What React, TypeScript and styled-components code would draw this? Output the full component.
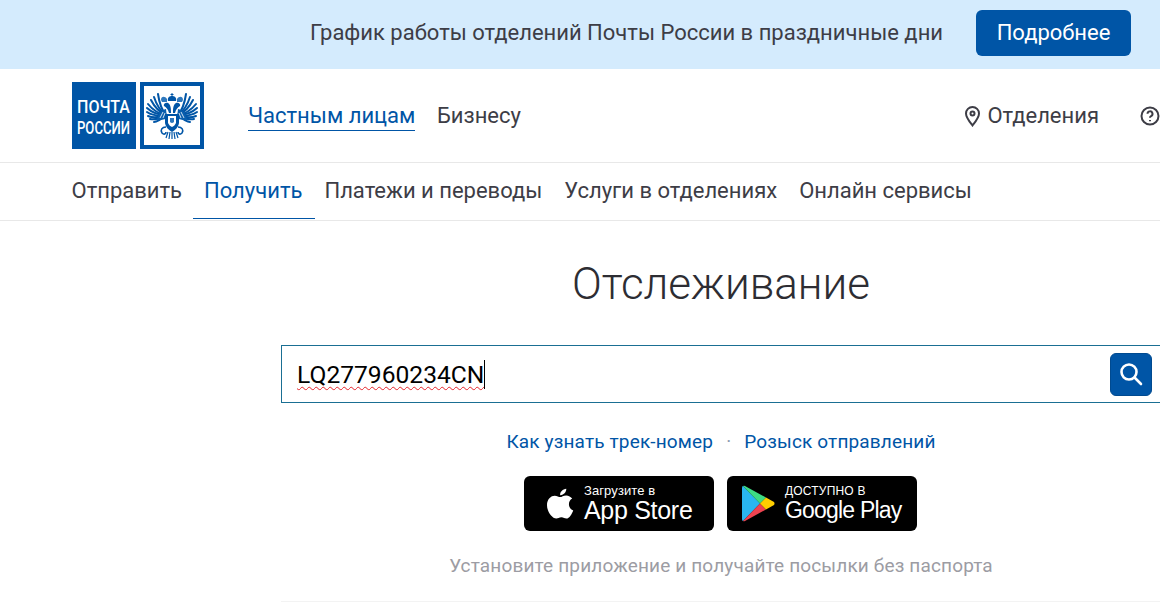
import React from 'react';
import styled, { createGlobalStyle } from 'styled-components';

const GlobalStyle = createGlobalStyle`
    html, body {
        margin: 0;
        padding: 0;
        background: #fff;
        overflow: hidden;
    }
    body {
        font-family: Roboto, "Noto Sans", sans-serif;
        color: #3d3d46;
    }
`;

const Page = styled.div`
    width: 1160px;
    height: 602px;
    overflow: hidden;
    background: #fff;
`;

const Banner = styled.div`
    height: 69px;
    box-sizing: border-box;
    padding: 10px 29px 0 310px;
    display: flex;
    justify-content: space-between;
    align-items: flex-start;
    background: #d4ebfd;
`;

const BannerText = styled.span`
    font-size: 22px;
    line-height: 46px;
    color: #3d3d46;
    white-space: nowrap;
`;

const BannerButton = styled.a`
    width: 155px;
    height: 46px;
    line-height: 46px;
    text-align: center;
    border-radius: 6px;
    background: #0055a6;
    color: #fff;
    font-size: 22px;
`;

const TopBar = styled.header`
    height: 94px;
    box-sizing: border-box;
    padding: 13px 0 0 72px;
    display: flex;
    align-items: flex-start;
    border-bottom: 1px solid #e8e8e8;
`;

const Logo = styled.svg`
    width: 132px;
    height: 67px;
    flex: none;
`;

const Audience = styled.nav`
    margin-left: 44px;
    padding-top: 20px;
    display: flex;
    gap: 21.5px;
`;

const AudienceLink = styled.a<{ $active?: boolean }>`
    font-size: 22px;
    line-height: 28px;
    height: 28px;
    color: ${({ $active }) => ($active ? '#0055a6' : '#3d3d46')};
    border-bottom: 1px solid ${({ $active }) => ($active ? '#0055a6' : 'transparent')};
`;

const TopActions = styled.div`
    margin-left: auto;
    padding-top: 20px;
    display: flex;
    gap: 41px;
`;

const TopAction = styled.a`
    display: flex;
    align-items: center;
    gap: 5px;
    height: 28px;
    font-size: 22px;
    line-height: 28px;
    color: #3d3d46;
`;

const MainNav = styled.nav`
    height: 58px;
    box-sizing: border-box;
    padding-left: 60.5px;
    display: flex;
    align-items: flex-start;
    border-bottom: 1px solid #e8e8e8;
`;

const MainNavItem = styled.a<{ $active?: boolean }>`
    height: 56px;
    box-sizing: border-box;
    padding: 0 ${({ $active }) => ($active ? 13 : 11)}px 0 11px;
    margin-right: ${({ $active }) => ($active ? -2 : 0)}px;
    font-size: 22px;
    line-height: 56px;
    white-space: nowrap;
    color: ${({ $active }) => ($active ? '#0055a6' : '#3d3d46')};
    border-bottom: 1px solid ${({ $active }) => ($active ? '#0055a6' : 'transparent')};
`;

const Main = styled.main`
    width: 880px;
    margin-left: 281px;
    display: flex;
    flex-direction: column;
    align-items: center;
`;

const Title = styled.h1`
    margin: 35px 0 0;
    font-size: 44px;
    line-height: 56px;
    font-weight: 300;
    color: #2d2d33;
`;

const SearchBox = styled.div`
    width: 100%;
    height: 58px;
    margin-top: 33px;
    box-sizing: border-box;
    padding: 0 8px 0 15px;
    display: flex;
    align-items: center;
    justify-content: space-between;
    border: 1px solid #1a6f93;
`;

const SearchValue = styled.div`
    display: flex;
    align-items: center;
    font-size: 24.6px;
    color: #000;
`;

const Misspelled = styled.span`
    text-decoration: underline wavy #e5232a 1.2px;
    text-underline-offset: 3px;
`;

const Caret = styled.span`
    width: 1px;
    height: 29px;
    background: #000;
`;

const SearchButton = styled.button`
    width: 42px;
    height: 43px;
    padding: 0;
    display: flex;
    align-items: center;
    justify-content: center;
    border: 1px solid #004a90;
    border-radius: 6px;
    background: #0055a6;
`;

const HelpLinks = styled.div`
    margin-top: 27px;
    display: flex;
    align-items: center;
    gap: 13px;
    font-size: 19px;
    line-height: 24px;
    letter-spacing: 0.15px;
    color: #0055a6;
`;

const Dot = styled.span`
    color: #8b9bb0;
`;

const Stores = styled.div`
    margin: 22px 0 0 -1px;
    display: flex;
    gap: 13px;
`;

const StoreBadge = styled.a<{ $inset: number; $gap: number }>`
    width: 190px;
    height: 55px;
    box-sizing: border-box;
    padding-left: ${({ $inset }) => $inset}px;
    display: flex;
    align-items: center;
    gap: ${({ $gap }) => $gap}px;
    border-radius: 6px;
    background: #000;
    color: #fff;
`;

const StoreText = styled.span`
    display: flex;
    flex-direction: column;
`;

const StoreCaption = styled.span<{ $upper?: boolean }>`
    font-family: "Liberation Sans", Arial, sans-serif;
    font-size: ${({ $upper }) => ($upper ? '12px' : '13px')};
    line-height: 14px;
    letter-spacing: ${({ $upper }) => ($upper ? '0.2px' : '0.1px')};
    white-space: nowrap;
`;

const StoreName = styled.span<{ $tight?: boolean }>`
    font-family: "Liberation Sans", Arial, sans-serif;
    font-size: ${({ $tight }) => ($tight ? '23px' : '25px')};
    line-height: 25px;
    letter-spacing: ${({ $tight }) => ($tight ? '-0.8px' : '-0.3px')};
    white-space: nowrap;
`;

const Hint = styled.p`
    margin: 23px 0 0;
    font-size: 19px;
    line-height: 24px;
    letter-spacing: 0.15px;
    color: #9c9ca3;
`;

const Divider = styled.div`
    width: 100%;
    height: 1px;
    margin-top: 23px;
    background: #f3f3f3;
`;

// перья крыла расходятся веером от плеча
const feathers: [number, number][] = [
    [86, 12],
    [82, 15],
    [79, 18],
    [76, 22],
    [75, 26],
    [75, 30],
    [76, 34],
    [78, 37],
    [82, 40],
];

const Wing = () => (
    <>
        {feathers.map(([x, y]) => (
            <path key={x * y} d={`M94 33Q${(x + 90) / 2} ${(y + 36) / 2 + 2} ${x} ${y}`} stroke="#0055a6" strokeWidth="2" fill="none" strokeLinecap="round" />
        ))}
        <path d="M94 27 C89 28 86 32 85 38 C88 38 92 38 95 36 Z" fill="#0a5fae" />
        <path d="M91 30 L88 36 M93 31 L91 36" stroke="#fff" strokeWidth="0.8" />
    </>
);

const Eagle = () => (
    <>
        <Wing />
        <g transform="matrix(-1 0 0 1 200 0)">
            <Wing />
        </g>
        {/* короны */}
        <path d="M100 11 v3 M98.500 12.500 h3" stroke="#0055a6" strokeWidth="1" />
        <path d="M96 19 C95 15 98 14 100 14 C102 14 105 15 104 19 Z" fill="#0055a6" />
        <path d="M89 18 C89 14 93 14 95 17 L95 20 H90 Z M111 18 C111 14 107 14 105 17 L105 20 H110 Z" fill="#2e78bd" />
        {/* головы и шеи */}
        <path d="M97 31 C96 27 94 25 92 24 C91 22 94 20 96 21 C99 23 99 27 99 31 Z" fill="#0055a6" />
        <path d="M103 31 C104 27 106 25 108 24 C109 22 106 20 104 21 C101 23 101 27 101 31 Z" fill="#0055a6" />
        {/* туловище со щитом */}
        <path d="M93 32 H107 V41 C106 46 103 48 100 50 C97 48 94 46 93 41 Z" fill="#0055a6" />
        <path d="M96 34 H104 V41 C103 43 102 44 100 45 C98 44 97 43 96 41 Z" fill="#fff" />
        <path d="M98 36 h4 v4 q-2 2 -4 0 Z" fill="#2e78bd" />
        {/* лапы и хвост */}
        <path d="M94 45 C90 45 88 48 90 51 C92 53 94 52 94 50 M106 45 C110 45 112 48 110 51 C108 53 106 52 106 50" stroke="#0055a6" strokeWidth="1.6" fill="none" />
        <path d="M96 50 L94 56 M100 50 V57 M98 50 L97 57 M102 50 L103 57 M104 50 L106 56" stroke="#0055a6" strokeWidth="1.2" />
    </>
);

const Logotype = () => (
    <Logo viewBox="0 0 132 67">
        <rect width="64" height="67" fill="#0055a6" />
        <text x="31.500" y="30.500" textAnchor="middle" fill="#fff" fontFamily="Roboto" fontSize="17.500" fontWeight="500" textLength="53" lengthAdjust="spacingAndGlyphs">
            ПОЧТА
        </text>
        <text x="31.500" y="51.500" textAnchor="middle" fill="#fff" fontFamily="Roboto" fontSize="17.500" fontWeight="500" textLength="53" lengthAdjust="spacingAndGlyphs">
            РОССИИ
        </text>
        <rect x="70" y="2" width="60" height="63" fill="#fff" stroke="#0055a6" strokeWidth="4" />
        <Eagle />
    </Logo>
);

const AppleIcon = () => (
    <svg width="27" height="31" viewBox="2 1.500 21 24" fill="#fff">
        <path d="M17 2c.2 2-1.700 5-4.800 5C12 4.500 14.200 2.300 17 2Z" />
        <path d="M12.300 8.500c1 0 2.500-1.300 4.600-1.300 1.900 0 3.700 1 4.700 2.500-3.800 2.200-3.200 7.600.8 9.200-.9 2.500-3 6.300-5.300 6.300-1.500 0-2.100-1-3.900-1-1.900 0-2.500 1-3.900 1C5.800 25.200 2 19.600 2 14.800c0-4.800 3.100-7.400 6-7.400 1.800 0 3.200 1.100 4.300 1.100Z" />
    </svg>
);

const PlayIcon = () => (
    <svg width="33" height="37" viewBox="0 0 33 37">
        <path d="M1 1 Q0 1 0 3 L0 34 Q0 36 1 36 L18 18.500 Z" fill="#29b6f0" />
        <path d="M1 1 L18 18.500 L24 12.500 L3 1 Q2 .5 1 1 Z" fill="#3ddc84" />
        <path d="M1 36 L18 18.500 L24 24.500 L3 36 Q2 36.500 1 36 Z" fill="#ee4350" />
        <path d="M24 12.500 L18 18.500 L24 24.500 L32 20 Q33 18.500 32 17 Z" fill="#ffce00" />
    </svg>
);

export default function App() {
    return (
        <Page>
            <GlobalStyle />
            <Banner>
                <BannerText>График работы отделений Почты России в праздничные дни</BannerText>
                <BannerButton>Подробнее</BannerButton>
            </Banner>
            <TopBar>
                <Logotype />
                <Audience>
                    <AudienceLink $active>Частным лицам</AudienceLink>
                    <AudienceLink>Бизнесу</AudienceLink>
                </Audience>
                <TopActions>
                    <TopAction>
                        <svg width="19" height="22" viewBox="0 0 19 22" fill="none" stroke="#3d3d46" strokeWidth="2">
                            <path d="M9.500 20.500C6 16 3 12.500 3 8.500a6.500 6.500 0 0 1 13 0c0 4-3 7.500-6.500 12Z" />
                            <circle cx="9.500" cy="8.500" r="2" />
                        </svg>
                        Отделения
                    </TopAction>
                    <TopAction>
                        <svg width="20" height="20" viewBox="0 0 20 20" fill="none" stroke="#3d3d46" strokeWidth="2">
                            <circle cx="10" cy="10" r="8.500" />
                            <path d="M7.500 7.800a2.500 2.500 0 1 1 3.600 2.300c-.8.400-1.100.9-1.100 1.700" />
                            <path d="M10 14v1.200" />
                        </svg>
                    </TopAction>
                </TopActions>
            </TopBar>
            <MainNav>
                <MainNavItem>Отправить</MainNavItem>
                <MainNavItem $active>Получить</MainNavItem>
                <MainNavItem>Платежи и переводы</MainNavItem>
                <MainNavItem>Услуги в отделениях</MainNavItem>
                <MainNavItem>Онлайн сервисы</MainNavItem>
            </MainNav>
            <Main>
                <Title>Отслеживание</Title>
                <SearchBox>
                    <SearchValue>
                        <Misspelled>LQ277960234CN</Misspelled>
                        <Caret />
                    </SearchValue>
                    <SearchButton aria-label="Найти">
                        <svg width="24" height="24" viewBox="0 0 24 24" fill="none" stroke="#fff" strokeWidth="2.600" strokeLinecap="round">
                            <circle cx="10" cy="10" r="7.500" />
                            <path d="M15.500 15.500L22 22" />
                        </svg>
                    </SearchButton>
                </SearchBox>
                <HelpLinks>
                    <span>Как узнать трек-номер</span>
                    <Dot>·</Dot>
                    <span>Розыск отправлений</span>
                </HelpLinks>
                <Stores>
                    <StoreBadge $inset={23} $gap={10}>
                        <AppleIcon />
                        <StoreText>
                            <StoreCaption>Загрузите в</StoreCaption>
                            <StoreName>App Store</StoreName>
                        </StoreText>
                    </StoreBadge>
                    <StoreBadge $inset={15} $gap={10}>
                        <PlayIcon />
                        <StoreText>
                            <StoreCaption $upper>ДОСТУПНО В</StoreCaption>
                            <StoreName $tight>Google Play</StoreName>
                        </StoreText>
                    </StoreBadge>
                </Stores>
                <Hint>Установите приложение и получайте посылки без паспорта</Hint>
                <Divider />
            </Main>
        </Page>
    );
}
